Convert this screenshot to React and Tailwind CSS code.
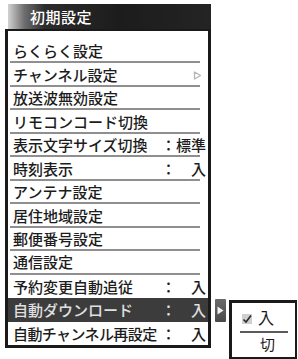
import React from "react";

const rows = [
  { label: "らくらく設定", sep: true },
  { label: "チャンネル設定", sep: true, chevron: true },
  { label: "放送波無効設定", sep: true },
  { label: "リモコンコード切換", sep: true },
  { label: "表示文字サイズ切換", sep: true, value: "標準" },
  { label: "時刻表示", sep: true, value: "入" },
  { label: "アンテナ設定", sep: true },
  { label: "居住地域設定", sep: true },
  { label: "郵便番号設定", sep: true },
  { label: "通信設定", sep: true },
  { label: "予約変更自動追従", value: "入" },
  { label: "自動ダウンロード", value: "入", active: true },
  { label: "自動チャンネル再設定", value: "入", tight: true },
];

function Chevron() {
  return (
    <svg width="9" height="9" viewBox="0 0 9 9" className="block">
      <path d="M1.5 1 L7.5 4.5 L1.5 8 Z" fill="none" stroke="#b5b5b5" strokeWidth="1.3" strokeLinejoin="round" />
    </svg>
  );
}

function SubMenu() {
  return (
    <>
      <div className="absolute left-[calc(100%+7px)] top-[1px] w-[11px] h-[23px] rounded-[1px] bg-[linear-gradient(to_bottom,#6a6a6a,#4a4a4a)] flex items-center justify-center">
        <svg width="7" height="9" viewBox="0 0 7 9" className="block">
          <path d="M0.5 0.5 L6.5 4.5 L0.5 8.5 Z" fill="#f4f4f4" />
        </svg>
      </div>
      <div className="absolute left-[calc(100%+21px)] top-[2px] w-[68px] h-[59px] bg-white border-l-[3px] border-t-[3px] border-r-[2px] border-b-[2px] border-[#1a1a1a] flex flex-col text-[#1a1a1a]">
        <div className="h-[28px] flex items-center pl-[10px]">
          <div className="w-[10px] h-[10px] bg-[#cfcfcf] mt-[3px] flex items-center justify-center">
            <svg width="10" height="10" viewBox="0 0 10 10" className="block">
              <path d="M1.5 5.5 L4 8 L9 1.5" fill="none" stroke="#2a2a2a" strokeWidth="1.6" />
            </svg>
          </div>
          <span className="ml-[6px] text-[16px] leading-none">入</span>
        </div>
        <div className="ml-[8px] w-[48px] h-[2px] bg-[#5a5a5a]" />
        <div className="h-[20px] flex items-center pl-[28px]">
          <span className="text-[15px] leading-none">切</span>
        </div>
      </div>
    </>
  );
}

export default function App() {
  return (
    <div className="w-[298px] h-[359px] bg-white overflow-hidden font-['Noto_Sans_CJK_JP','Noto_Sans',sans-serif]">
      <div className="pt-[4px] pl-[5px] w-[211px]">
        <div className="ml-[3px] h-[25px] flex items-center pl-[22px] bg-[linear-gradient(to_right,#d2d2d2_0%,#6e6e6e_8%,#2c2c2c_18%,#1c1c1c_55%,#242424_100%)]">
          <span className="text-white text-[15px] leading-none tracking-[0.5px] font-medium">初期設定</span>
        </div>
        <div className="border-l-[3px] border-t-[2px] border-r-[3px] border-b-[3px] border-[#1a1a1a] bg-white pt-[9px]">
          <div className="h-[305px] flex flex-col">
            {rows.map((r, i) => (
              <div
                key={i}
                className={
                  "relative flex-1 flex flex-col " +
                  (r.active ? "bg-[#3c3c3c] text-[#e0e0e0]" : "text-[#1c1c1c]")
                }
              >
                <div className="flex-1 flex items-center pl-[5px] pr-[2px] text-[15px] leading-none whitespace-nowrap font-medium">
                  <span className={"flex-1 min-w-0 " + (r.tight ? "tracking-[-0.6px]" : "")}>{r.label}</span>
                  {r.value && (
                    <div className="flex items-center w-[45px] shrink-0">
                      <span className="w-[15px] text-center">：</span>
                      <span className="flex-1 text-right">{r.value}</span>
                    </div>
                  )}
                  {r.chevron && (
                    <div className="mr-[4px] mt-[2px]">
                      <Chevron />
                    </div>
                  )}
                </div>
                {r.sep && <div className="ml-[2px] mr-[8px] h-[2px] bg-[#8f8f8f]" />}
                {r.active && <SubMenu />}
              </div>
            ))}
          </div>
        </div>
      </div>
    </div>
  );
}
